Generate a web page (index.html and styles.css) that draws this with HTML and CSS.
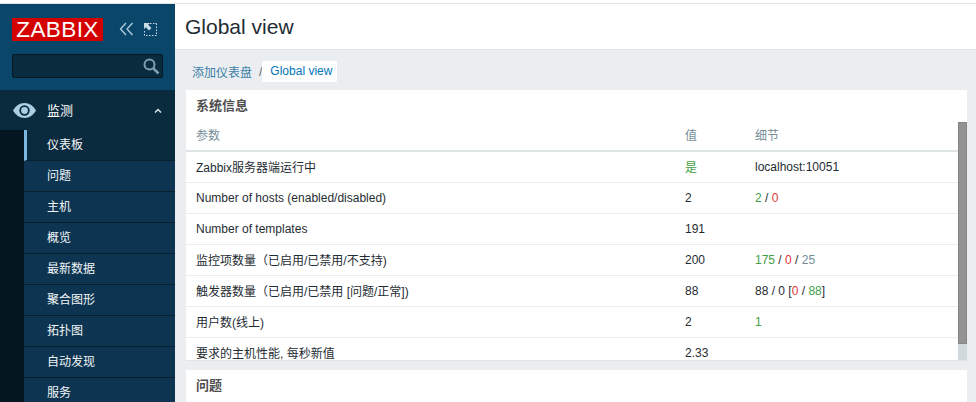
FILE: index.html
```html
<!DOCTYPE html>
<html lang="zh-CN">
<head>
  <meta charset="UTF-8">
  <title>Global view</title>
  <link rel="stylesheet" href="styles.css">
</head>
<body>
<div class="page">
  <aside class="sidebar">
    <div class="brand">
      <div class="logo">ZABBIX</div>
      <svg class="brand-icon" width="15" height="14" viewBox="0 0 15 14"><path d="M7 1 1.500 7 7 13M13.500 1 8 7l5.500 6" fill="none" stroke="#b4cfde" stroke-width="1.300"/></svg>
      <svg class="brand-icon" width="13" height="13" viewBox="0 0 13 13"><path d="M6 .5h1.500M9 .5h1.500M11.500 .5h1v1.500M12.500 3.500V5M12.500 6.500V8M12.500 9.500V11M12.500 12.500H11M9.500 12.500H8M6.500 12.500H5M3.500 12.500H2M.5 12.500V11M.5 9.500V8" fill="none" stroke="#c8dbe6"/><path d="M0 0h6L4.200 1.800 7.500 5 5 7.500 1.800 4.200 0 6z" fill="#c8dbe6"/></svg>
    </div>
    <div class="search">
      <svg width="17" height="17" viewBox="0 0 17 17"><circle cx="6.500" cy="6.500" r="5" fill="none" stroke="#7f9fb2" stroke-width="2"/><path d="m10.500 10.500 5 5" stroke="#7f9fb2" stroke-width="2.500"/></svg>
    </div>
    <div class="menu">
      <div class="menu-head">
        <svg width="23" height="15" viewBox="0 0 23 15"><path d="M11.500 0C6.500 0 2.500 3 0 7.500 2.500 12 6.500 15 11.500 15S20.500 12 23 7.500C20.500 3 16.500 0 11.500 0z" fill="#a9cfe3"/><circle cx="11.500" cy="7.500" r="5.200" fill="#0a2a3d"/><circle cx="11.500" cy="7.500" r="3.400" fill="#a9cfe3"/></svg>
        <span class="menu-title">监测</span>
        <svg class="menu-arrow" width="8" height="5" viewBox="0 0 8 5"><path d="M1 4.500 4 1.500l3 3" fill="none" stroke="#d5e3eb" stroke-width="1.500"/></svg>
      </div>
      <ul class="submenu">
        <li class="active">仪表板</li>
        <li>问题</li>
        <li>主机</li>
        <li>概览</li>
        <li>最新数据</li>
        <li>聚合图形</li>
        <li>拓扑图</li>
        <li>自动发现</li>
        <li>服务</li>
      </ul>
    </div>
  </aside>
  <main class="main">
    <header class="header"><h1>Global view</h1></header>
    <div class="content">
      <nav class="crumbs">
        <a class="crumb-link">添加仪表盘</a>
        <span class="crumb-sep">/</span>
        <a class="crumb-current">Global view</a>
      </nav>
      <section class="card card-info">
        <h4>系统信息</h4>
        <div class="card-body">
          <div class="table-wrap">
            <table>
              <thead>
                <tr><th class="col-name">参数</th><th class="col-value">值</th><th>细节</th></tr>
              </thead>
              <tbody>
                <tr><td>Zabbix服务器端运行中</td><td class="green">是</td><td>localhost:10051</td></tr>
                <tr><td>Number of hosts (enabled/disabled)</td><td>2</td><td><span class="green">2</span> / <span class="red">0</span></td></tr>
                <tr><td>Number of templates</td><td>191</td><td></td></tr>
                <tr><td>监控项数量（已启用/已禁用/不支持)</td><td>200</td><td><span class="green">175</span> / <span class="red">0</span> / <span class="grey">25</span></td></tr>
                <tr><td>触发器数量（已启用/已禁用 [问题/正常])</td><td>88</td><td>88 / 0 [<span class="red">0</span> / <span class="green">88</span>]</td></tr>
                <tr><td>用户数(线上)</td><td>2</td><td><span class="green">1</span></td></tr>
                <tr><td>要求的主机性能, 每秒新值</td><td>2.33</td><td></td></tr>
              </tbody>
            </table>
          </div>
          <div class="scrollbar"><div class="thumb"></div></div>
        </div>
      </section>
      <section class="card">
        <h4>问题</h4>
      </section>
    </div>
  </main>
</div>
</body>
</html>
```

FILE: styles.css
```css
html, body {
  margin: 0;
  padding: 0;
  height: 100%;
  overflow: hidden;
}
body {
  background-color: #fff;
  font-family: "Liberation Sans", "Noto Sans CJK SC", sans-serif;
  font-size: 12px;
  color: #1f2c33;
}
.page {
  display: flex;
  height: 402px;
  padding-top: 3px;
  box-sizing: border-box;
  overflow: hidden;
}

/* sidebar */
.sidebar {
  width: 175px;
  flex: none;
  background-color: #0a466a;
  border-top: 1px solid #dfe4e7;
}
.brand {
  display: flex;
  align-items: center;
  height: 50px;
  padding: 0 0 0 12px;
}
.logo {
  width: 91px;
  height: 23px;
  line-height: 24px;
  background-color: #d40000;
  color: #fff;
  font-size: 22.5px;
  text-align: center;
  letter-spacing: .4px;
  margin-right: 16px;
}
.brand-icon {
  margin-right: 10px;
}
.search {
  display: flex;
  align-items: center;
  justify-content: flex-end;
  width: 151px;
  height: 24px;
  box-sizing: border-box;
  margin: 0 12px;
  padding-right: 2px;
  background-color: #0a2a3d;
  border: 1px solid #04161f;
  border-radius: 2px;
}
.menu {
  margin-top: 12px;
}
.menu-head {
  display: flex;
  align-items: center;
  height: 40px;
  padding-left: 13px;
  background-color: #0a2a3d;
}
.menu-title {
  margin-left: 11px;
  margin-bottom: 2px;
  color: #fff;
  font-size: 13px;
}
.menu-arrow {
  margin-left: auto;
  margin-right: 13px;
}
.submenu {
  list-style: none;
  margin: 0;
  padding: 0 0 0 24px;
  background-color: #04161f;
}
.submenu li {
  height: 30px;
  line-height: 30px;
  padding-left: 23px;
  background-color: #0d3551;
  border-bottom: 1px solid #04202f;
  color: #f2f6f8;
  font-size: 12px;
}
.submenu li.active {
  background-color: #0a2a3d;
  padding-left: 20px;
  border-left: 3px solid #7ab8e0;
}

/* main */
.main {
  flex: 1;
  min-width: 0;
  background-color: #ebeef0;
}
.header {
  height: 45px;
  display: flex;
  align-items: center;
  padding-left: 10px;
  background-color: #fff;
  border-top: 1px solid #dfe4e7;
  border-bottom: 1px solid #dfe4e7;
}
.header h1 {
  margin: 0;
  font-size: 21px;
  font-weight: normal;
  color: #1f2c33;
}
.content {
  padding: 11px 9px 0 11px;
}
.crumbs {
  display: flex;
  align-items: center;
  height: 21px;
  padding-left: 6px;
  margin-bottom: 8px;
}
.crumb-link {
  color: #3b7ea8;
}
.crumb-sep {
  margin: 0 0 0 7px;
  color: #5a6a73;
}
.crumb-current {
  padding: 0 5px 0 8px;
  height: 21px;
  line-height: 21px;
  background-color: #fff;
  color: #0275b8;
  border-radius: 2px;
}

.card {
  background-color: #fff;
  margin-bottom: 9px;
}
.card h4 {
  margin: 0;
  height: 32px;
  line-height: 32px;
  padding-left: 10px;
  font-size: 13px;
  font-weight: bold;
  color: #4f4f4f;
}
.card-info {
  border-bottom: 1px solid #dfe4e7;
}
.card-body {
  display: flex;
  height: 238px;
}
.table-wrap {
  flex: 1;
  min-width: 0;
  overflow: hidden;
}
table {
  width: 100%;
  border-collapse: collapse;
  table-layout: fixed;
}
th {
  height: 29px;
  padding: 0 0 3px 10px;
  text-align: left;
  font-weight: normal;
  color: #768d99;
  border-bottom: 2px solid #dfe4e7;
  box-sizing: border-box;
}
.col-name {
  width: 489px;
}
.col-value {
  width: 70px;
}
td {
  height: 31px;
  padding: 0 0 0 10px;
  border-bottom: 1px solid #ebeef0;
  box-sizing: border-box;
}
.green {
  color: #429e47;
}
.red {
  color: #e33734;
}
.grey {
  color: #768d99;
}
.scrollbar {
  width: 9px;
  flex: none;
  background-color: #d1d9dd;
}
.thumb {
  height: 222px;
  box-sizing: border-box;
  background-color: #939393;
  border: 1px solid #858585;
}
```
